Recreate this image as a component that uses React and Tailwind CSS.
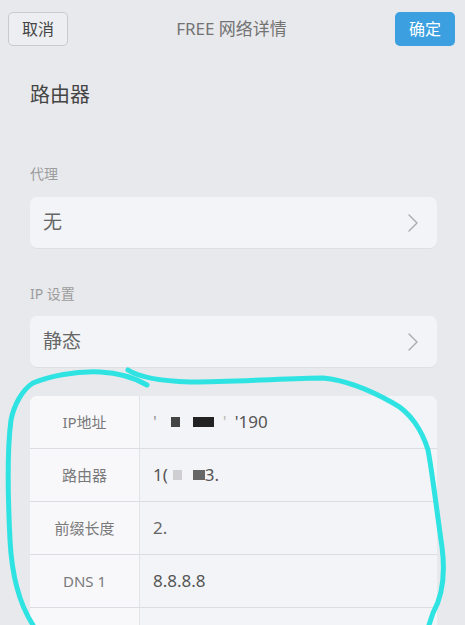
import React from 'react';

const font = "font-['Noto_Sans','Noto_Sans_CJK_SC',sans-serif]";

const Chevron = () => (
  <svg width="12" height="20" viewBox="0 0 12 20" fill="none">
    <path d="M2 2 L10 10 L2 18" stroke="#a9abb0" strokeWidth="1.4" strokeLinecap="round" strokeLinejoin="round" />
  </svg>
);

const Block = ({ className }) => <span className={`inline-block align-middle ${className}`} />;

const SelectRow = ({ value }) => (
  <div className="flex h-[51px] items-center justify-between rounded-[7px] bg-[#f3f4f7] pl-[13px] pr-[18px] shadow-[0_1px_0_rgba(0,0,0,0.04)]">
    <span className="text-[19px] text-[#666]">{value}</span>
    <Chevron />
  </div>
);

const TableRow = ({ label, children, last }) => (
  <div className={`flex h-[53px] ${last ? '' : 'border-b border-[#dcdde1]'}`}>
    <div className="flex w-[110px] items-center justify-center border-r border-[#e2e3e7] bg-[#f8f8fa] text-[15px] text-[#7a7a7a]">
      {label}
    </div>
    <div className="flex flex-1 items-center pl-[13px] text-[17px] text-[#555]">{children}</div>
  </div>
);

export default function App() {
  return (
    <div className={`relative h-[625px] w-[465px] overflow-hidden bg-[#e8e9ec] ${font}`}>
      {/* Header */}
      <div className="flex items-center justify-between pl-2 pr-[10px] pt-3">
        <button className="h-[34px] w-[60px] rounded-[5px] border border-[#c9cace] bg-[#eceef1] text-[16px] text-[#444]">
          取消
        </button>
        <div className="text-[17px] text-[#737373]">FREE 网络详情</div>
        <button className="h-[34px] w-[60px] rounded-[5px] bg-[#3b9fe0] text-[16px] text-white">确定</button>
      </div>

      <div className="pl-[30px] pr-[28px]">
        <div className="mt-[36px] text-[20px] leading-[26px] text-[#444]">路由器</div>

        <div className="mt-[56px] text-[14px] leading-[20px] text-[#9c9c9c]">代理</div>
        <div className="mt-[13px]">
          <SelectRow value="无" />
        </div>

        <div className="mt-[36px] text-[14px] leading-[20px] text-[#9c9c9c]">IP 设置</div>
        <div className="mt-[12px]">
          <SelectRow value="静态" />
        </div>

        <div className="mt-[29px] overflow-hidden rounded-[7px] bg-[#f3f4f7]">
          <TableRow label="IP地址">
            <span className="text-[#999]">'</span>
            <Block className="ml-[14px] h-[10px] w-[9px] bg-[#444]" />
            <Block className="ml-[13px] h-[10px] w-[21px] bg-[#222]" />
            <span className="ml-[9px] text-[#bbb]">'</span>
            <span className="ml-[8px]">'190</span>
          </TableRow>
          <TableRow label="路由器">
            <span>1(</span>
            <Block className="ml-[5px] h-[10px] w-[9px] bg-[#cfcfd2]" />
            <Block className="ml-[11px] h-[10px] w-[12px] bg-[#666]" />
            <span>3.</span>
          </TableRow>
          <TableRow label="前缀长度">
            <span className="text-[#666]">2.</span>
          </TableRow>
          <TableRow label="DNS 1">8.8.8.8</TableRow>
          <TableRow label="DNS 2" last>
            8.8.4.4
          </TableRow>
        </div>
      </div>

      {/* hand-drawn highlight */}
      <svg className="pointer-events-none absolute left-0 top-0" width="465" height="625" viewBox="0 0 465 625" fill="none">
        <path
          d="M147 385 C135 378 120 373 100 372 C75 371 50 376 33 383 C22 390 14 405 11 420 C7 450 8 500 10 540 C12 580 20 605 33 625"
          stroke="#2fe3e3"
          strokeWidth="5"
          strokeLinecap="round"
        />
        <path
          d="M128 370 C140 378 160 381 190 382 C240 382 290 378 323 378 C345 380 370 390 393 403 C410 412 422 430 428 450 C432 470 438 520 442 547 C445 570 443 595 433 613 L429 625"
          stroke="#2fe3e3"
          strokeWidth="5"
          strokeLinecap="round"
        />
      </svg>
    </div>
  );
}
